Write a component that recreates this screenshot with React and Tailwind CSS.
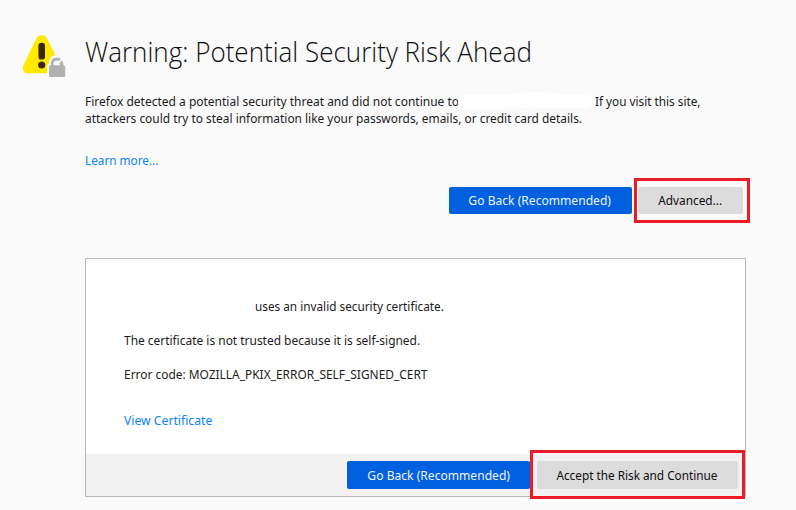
import React from "react";

function WarningIcon() {
  return (
    <svg className="block h-[46px] w-[46px]" viewBox="0 0 46 46">
      <path
        d="M19.7 1.2c-2.3 0-4.2 1.1-5.3 3.3L1.6 30.8C-.3 34.8 1.6 39.3 6 39.3h26l7-7L25 4.5c-1.1-2.2-3-3.3-5.3-3.3z"
        fill="#ffe900"
      />
      <rect x="16.4" y="8.8" width="6.6" height="16.8" rx="3.2" fill="#3e2800" />
      <circle cx="19.7" cy="31" r="3.6" fill="#3e2800" />
      <path
        d="M25 46V32.5q0-2.5 2.1-3.2c0-4.3 2.6-8.3 7.8-8.3 4.8 0 8.1 3.5 8.1 8.4l3 2V46z"
        fill="#fafafa"
      />
      <path d="M30.2 33v-3c0-3.2 2-5 4.7-5 1.3 0 2.3.3 3.1.9" fill="none" stroke="#b1b1b3" strokeWidth="2.8" />
      <path d="M37.4 29.2l2.6-2.6q1.4 1.5 1.4 5.4h-3.2q0-1.8-.8-2.8z" fill="#b1b1b3" />
      <rect x="27" y="31.3" width="16.2" height="11.8" rx="1.6" fill="#b1b1b3" />
    </svg>
  );
}

function Button({ primary, className, children }) {
  return (
    <button
      className={`flex shrink-0 items-center justify-center rounded-[2px] whitespace-nowrap text-[13px] ${
        primary ? "bg-[#0060df] text-[#f0f4fd]" : "bg-[#dcdcdd] text-[#0c0c0d]"
      } ${className}`}
    >
      {children}
    </button>
  );
}

export default function App() {
  return (
    <main className="h-[510px] w-[796px] overflow-hidden bg-[#fafafa] font-['Noto_Sans','Open_Sans',sans-serif] text-[13px] leading-[17px] text-[#1b1b1d]">
      <header className="flex h-[93px] pl-[22px] pt-[34px]">
        <WarningIcon />
        <h1 className="-mt-px ml-[17px] whitespace-nowrap font-['Open_Sans','Noto_Sans',sans-serif] text-[28px] font-light leading-[36px] text-[#0c0c0d]">
          <span className="inline-block origin-left scale-x-[0.929]">Warning: Potential Security Risk Ahead</span>
        </h1>
      </header>

      <section className="ml-[85px] w-[661px]">
        <div className="flex h-[17px] whitespace-nowrap">
          <span className="w-[373px]">
            <span className="inline-block origin-left scale-x-[0.923]">
              Firefox detected a potential security threat and did not continue to
            </span>
          </span>
          <svg className="z-10 -mt-[2px] h-[20px] w-[137px] shrink-0" viewBox="0 0 137 20">
            <path
              d="M6 4h44Q64 1 78 1q18 0 26 3h26q5 1 5 6t-5 7q-35 1-64-1-10 0-20 2H7q-7-1-7-7t6-7z"
              fill="#fff"
            />
          </svg>
          <span className="inline-block origin-left scale-x-[0.905]">If you visit this site,</span>
        </div>
        <p className="whitespace-nowrap">
          <span className="inline-block origin-left scale-x-[0.915]">
            attackers could try to steal information like your passwords, emails, or credit card details.
          </span>
        </p>
        <a className="mt-[25px] block text-[#0a84ff]">
          <span className="inline-block origin-left scale-x-[0.905]">Learn more...</span>
        </a>
      </section>

      <div className="ml-[449px] mt-[9px] flex h-[45px] items-center">
        <Button primary className="h-[27px] w-[183px] pr-[2px]">
          <span className="inline-block scale-x-[0.93]">Go Back (Recommended)</span>
        </Button>
        <div className="ml-[2px] flex h-[45px] w-[116px] items-center border-[3px] border-[#ee1a26] pl-px">
          <Button className="h-[27px] w-[105px]">
            <span className="inline-block scale-x-[0.91]">Advanced...</span>
          </Button>
        </div>
      </div>

      <section className="ml-[85px] mt-[35px] flex h-[239px] w-[661px] flex-col border border-[#b8b8ba] bg-white">
        <div className="flex h-[195px] flex-col pl-[38px] pt-[39px]">
          <p className="pl-[131px]">
            <span className="inline-block origin-left scale-x-[0.906]">uses an invalid security certificate.</span>
          </p>
          <p className="mt-[17px]">
            <span className="inline-block origin-left scale-x-[0.918]">
              The certificate is not trusted because it is self-signed.
            </span>
          </p>
          <p className="mt-[17px]">
            <span className="inline-block origin-left scale-x-[0.917]">
              Error code: MOZILLA_PKIX_ERROR_SELF_SIGNED_CERT
            </span>
          </p>
          <a className="mt-[29px] text-[#0a84ff]">
            <span className="inline-block origin-left scale-x-[0.938]">View Certificate</span>
          </a>
        </div>
        <footer className="flex h-[42px] items-center bg-[#f2f2f2] pl-[261px]">
          <Button primary className="h-[28px] w-[183px]">
            <span className="inline-block scale-x-[0.93]">Go Back (Recommended)</span>
          </Button>
          <div className="-mt-[2px] flex h-[49px] w-[215px] shrink-0 items-center border-[3px] border-[#ee1a26] pl-[4px]">
            <Button className="mt-[2px] h-[28px] w-[201px] pr-[2px]">
              <span className="inline-block scale-x-[0.905]">Accept the Risk and Continue</span>
            </Button>
          </div>
        </footer>
      </section>
    </main>
  );
}
